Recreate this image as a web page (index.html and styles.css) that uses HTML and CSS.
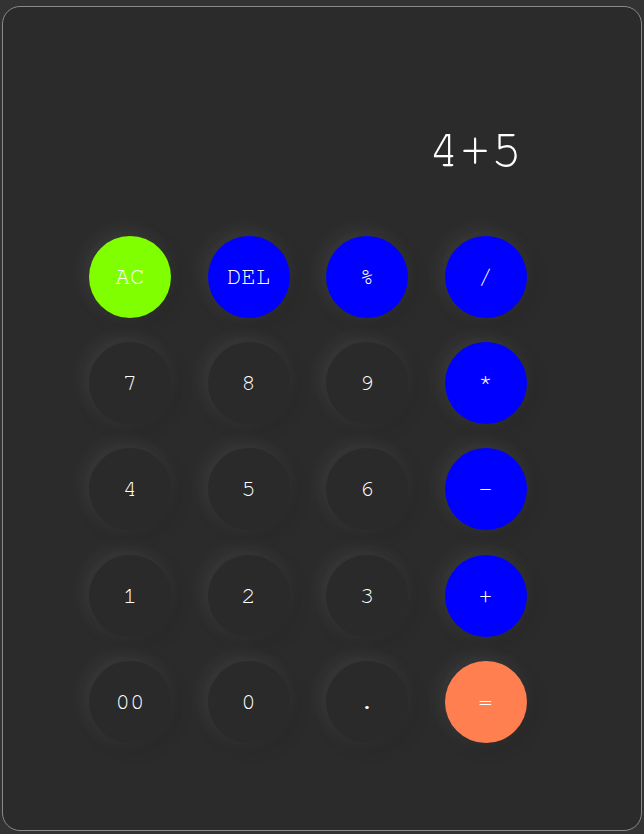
FILE: index.html
```html
<!DOCTYPE html>
<html>
<head>
<meta charset="utf-8">
<link rel="stylesheet" href="styles.css">
</head>
<body>
<div class="calc">
  <div class="display">4+5</div>
  <div class="keys">
    <button class="key green">AC</button>
    <button class="key blue">DEL</button>
    <button class="key blue">%</button>
    <button class="key blue">/</button>
    <button class="key">7</button>
    <button class="key">8</button>
    <button class="key">9</button>
    <button class="key blue">*</button>
    <button class="key">4</button>
    <button class="key">5</button>
    <button class="key">6</button>
    <button class="key blue">-</button>
    <button class="key">1</button>
    <button class="key">2</button>
    <button class="key">3</button>
    <button class="key blue">+</button>
    <button class="key">00</button>
    <button class="key">0</button>
    <button class="key">.</button>
    <button class="key orange">=</button>
  </div>
</div>
</body>
</html>
```
FILE: styles.css
```css
html, body {
  margin: 0;
  padding: 0;
  background: #333333;
}
body {
  padding: 6px 2px 3px 2px;
  font-family: "Nimbus Mono PS", "FreeMono", "Courier", "Courier New", monospace;
}
.calc {
  box-sizing: border-box;
  width: 640px;
  height: 825px;
  border: 1px solid #8a8a8a;
  border-radius: 18px;
  background: #2b2b2b;
  padding: 108px 0 0 86px;
}
.display {
  width: 438px;
  box-sizing: border-box;
  padding-right: 5px;
  text-align: right;
  color: #ffffff;
  font-size: 52px;
  line-height: 70px;
  height: 70px;
}
.keys {
  margin-top: 51px;
  display: grid;
  grid-template-columns: repeat(4, 82px);
  column-gap: 36.5px;
  row-gap: 24.2px;
}
.key {
  width: 82px;
  height: 82px;
  border-radius: 50%;
  border: none;
  padding: 0;
  background: #2a2a2a;
  color: #ffffff;
  font-family: "Nimbus Mono PS", "FreeMono", "Courier", "Courier New", monospace;
  font-size: 24px;
  box-shadow: -4px -4px 20px rgba(255,255,255,0.09), 4px 4px 20px rgba(0,0,0,0.12);
}
.green { background: #7fff00; color: #ffffff; }
.blue { background: #0000ff; color: #ffffff; }
.orange { background: #ff7f50; color: #ffffff; }
```
